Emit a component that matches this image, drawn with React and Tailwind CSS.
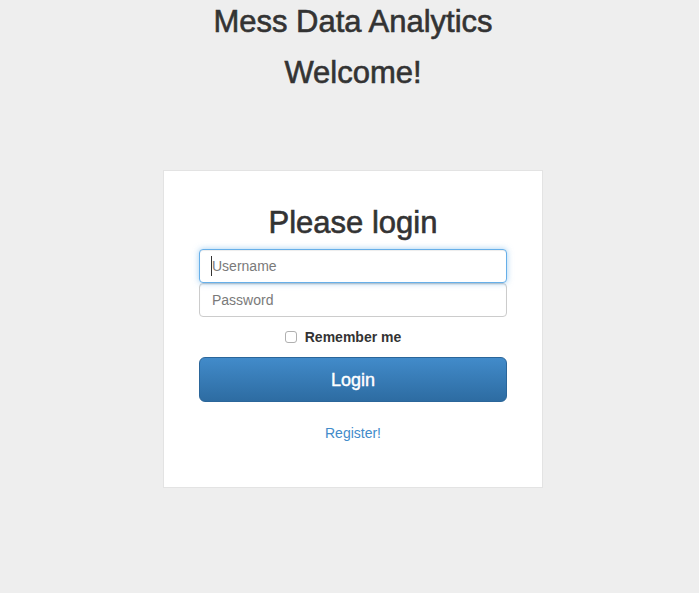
export default function App() {
  return (
    <div className="min-h-screen bg-[#eeeeee] text-[#333333] [font-family:'Liberation_Sans',Arial,sans-serif]">
      <div className="flex flex-col items-center pl-[7px]">
        <h1 className="mt-[5px] text-[31px] leading-[33px] font-normal [-webkit-text-stroke:0.6px_#333333]">Mess Data Analytics</h1>
        <h2 className="mt-[18px] text-[31px] leading-[33px] font-normal [-webkit-text-stroke:0.6px_#333333]">Welcome!</h2>
        <div className="mt-[81px] w-[380px] h-[318px] bg-white border border-[#e3e3e3] flex flex-col items-center pt-[35px]">
          <h2 className="text-[31px] leading-[33px] font-normal [-webkit-text-stroke:0.6px_#333333]">Please login</h2>
          <div className="mt-[10px] w-[308px] flex flex-col">
            <div className="relative">
              <input
                type="text"
                placeholder="Username"
                className="block w-full h-[34px] px-[12px] text-[14px] bg-white border border-[#66afe9] rounded-[4px] outline-none shadow-[inset_0_1px_1px_rgba(0,0,0,0.075),0_0_6px_rgba(102,175,233,0.6)] placeholder:text-[#7a7a7a]"
              />
              <span className="absolute left-[12px] top-[7px] w-px h-[20px] bg-[#333]"></span>
            </div>
            <input
              type="password"
              placeholder="Password"
              className="block w-full h-[34px] px-[12px] text-[14px] bg-white border border-[#cccccc] rounded-[4px] outline-none shadow-[inset_0_1px_1px_rgba(0,0,0,0.075)] placeholder:text-[#7a7a7a]"
            />
          </div>
          <label className="mt-[14px] pr-[20px] flex items-center h-[12px] text-[14px] font-bold">
            <span className="w-[12px] h-[12px] rounded-[3px] border border-[#b0b0b0] bg-white mr-[8px]"></span>
            Remember me
          </label>
          <button className="mt-[14px] w-[308px] h-[45px] rounded-[6px] border border-[#2b669a] bg-gradient-to-b from-[#428bca] to-[#2d6ca2] text-white text-[18px] leading-none [-webkit-text-stroke:0.4px_#ffffff]">
            Login
          </button>
          <a href="#" className="mt-[21px] text-[14px] leading-[20px] text-[#428bca]">Register!</a>
        </div>
      </div>
    </div>
  );
}
